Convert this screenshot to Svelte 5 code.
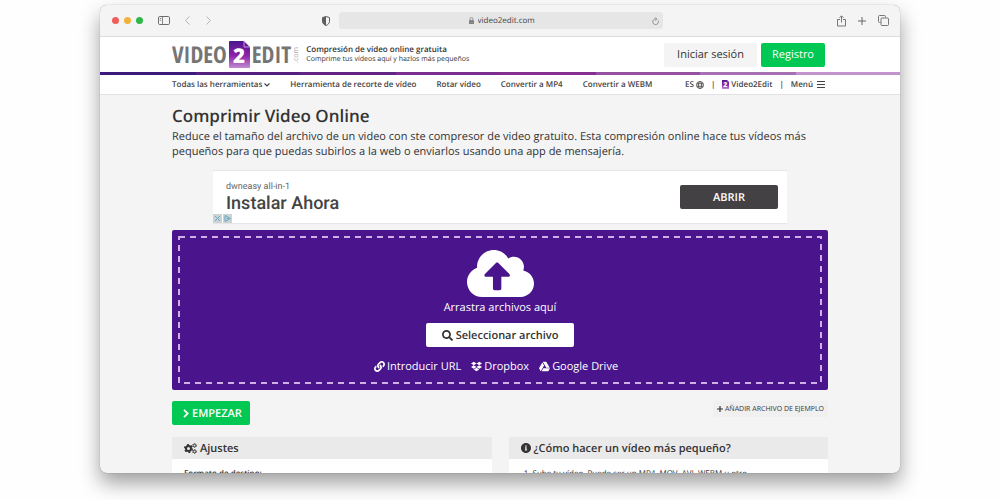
<script lang="ts">
  const tools = [
    'Herramienta de recorte de vídeo',
    'Rotar vídeo',
    'Convertir a MP4',
    'Convertir a WEBM',
  ]

  const sources = [
    {
      label: 'Introducir URL',
      box: '0 0 512 512',
      path: 'M326.612 185.391c59.747 59.809 58.927 155.698.36 214.59-.11.12-.24.25-.36.37l-67.2 67.2c-59.27 59.27-155.699 59.262-214.96 0-59.27-59.26-59.27-155.7 0-214.96l37.106-37.106c9.84-9.84 26.786-3.3 27.294 10.606.648 17.722 3.826 35.527 9.69 52.721 1.986 5.822.567 12.262-3.783 16.612l-13.087 13.087c-28.026 28.026-28.905 73.66-1.155 101.96 28.024 28.579 74.086 28.749 102.325.51l67.2-67.19c28.191-28.191 28.073-73.757 0-101.83-3.701-3.694-7.429-6.564-10.341-8.569a16.037 16.037 0 0 1-6.947-12.606c-.396-10.567 3.348-21.456 11.698-29.806l21.054-21.055c5.521-5.521 14.182-6.199 20.584-1.731a152.482 152.482 0 0 1 20.522 17.197zM467.547 44.449c-59.261-59.262-155.69-59.27-214.96 0l-67.2 67.2c-.12.12-.25.25-.36.37-58.566 58.892-59.387 154.781.36 214.59a152.454 152.454 0 0 0 20.521 17.196c6.402 4.468 15.064 3.789 20.584-1.731l21.054-21.055c8.35-8.35 12.094-19.239 11.698-29.806a16.037 16.037 0 0 0-6.947-12.606c-2.912-2.005-6.64-4.875-10.341-8.569-28.073-28.073-28.191-73.639 0-101.83l67.2-67.19c28.239-28.239 74.3-28.069 102.325.51 27.75 28.3 26.872 73.934-1.155 101.96l-13.087 13.087c-4.35 4.35-5.769 10.79-3.783 16.612 5.864 17.194 9.042 34.999 9.69 52.721.509 13.906 17.454 20.446 27.294 10.606l37.106-37.106c59.271-59.259 59.271-155.699.001-214.959z',
    },
    {
      label: 'Dropbox',
      box: '0 0 528 512',
      path: 'M264.4 116.3l-132 84.3 132 84.3-132 84.3L0 284.1l132.3-84.3L0 116.3 132.3 32l132.1 84.3zM131.6 395.7l132-84.3 132 84.3-132 84.3-132-84.3zm132.8-111.6l132-84.3-132-83.6L395.7 32 528 116.3l-132.3 84.3L528 284.8l-132.3 84.3-131.3-85z',
    },
    {
      label: 'Google Drive',
      box: '0 0 512 512',
      path: 'M339 314.9L175.4 32h161.2l163.6 282.9H339zm-137.5 23.6L120.9 480h310.5L512 338.5H201.5zM154.1 67.4L0 338.5 80.6 480 237 208.8 154.1 67.4z',
    },
  ]

  let url = $state('video2edit.com')
</script>

{#snippet badge()}
  <svg class="badge" viewBox="0 0 42 54" aria-hidden="true">
    <defs>
      <linearGradient id="violet" x1="0" y1="0" x2="0" y2="1">
        <stop offset="0" stop-color="#4a148c" />
        <stop offset="0.55" stop-color="#8e24aa" />
        <stop offset="1" stop-color="#c28bd2" />
      </linearGradient>
    </defs>
    <path fill="url(#violet)" d="M2 0h28l12 12v40a2 2 0 0 1-2 2H2a2 2 0 0 1-2-2V2a2 2 0 0 1 2-2z" />
    <path fill="#6a1b9a" stroke="#e1bee7" stroke-width="1.5" d="M30 0v12h12z" />
    <text x="20" y="43" text-anchor="middle" font-size="41" font-weight="800" fill="#fff">2</text>
  </svg>
{/snippet}

<div class="window">
  <div class="titlebar">
    <div class="side">
      <span class="light red"></span>
      <span class="light amber"></span>
      <span class="light green"></span>
      <svg class="sidebar" width="12" height="9" viewBox="0 0 12 9" fill="none" stroke="#6d6d6d">
        <rect x="0.5" y="0.5" width="11" height="8" rx="1.2" />
        <path d="M4.5 0.5v8M1.8 2.5h1.4M1.8 4.2h1.4" stroke-width="0.8" />
      </svg>
      <svg class="arrow" width="5" height="9" viewBox="0 0 5 9" fill="none" stroke="#b4b4b4">
        <path d="M4.5 0.5l-4 4 4 4" />
      </svg>
      <svg class="arrow" width="5" height="9" viewBox="0 0 5 9" fill="none" stroke="#b4b4b4">
        <path d="M0.5 0.5l4 4-4 4" />
      </svg>
      <svg class="shield" width="8" height="10" viewBox="0 0 8 10">
        <path d="M4 0.5L7.5 1.6v3.6C7.5 7.3 6 8.7 4 9.5 2 8.7 0.5 7.3 0.5 5.2V1.6z" fill="none" stroke="#5f5f5f" />
        <path d="M4 0.5v9C2 8.7 0.5 7.3 0.5 5.2V1.6z" fill="#5f5f5f" />
      </svg>
    </div>
    <div class="address">
      <svg width="5" height="7" viewBox="0 0 5 7" aria-hidden="true">
        <rect y="3" width="5" height="4" rx="0.6" fill="#858585" />
        <path d="M1.1 3V1.9a1.4 1.4 0 0 1 2.8 0V3" fill="none" stroke="#858585" stroke-width="0.8" />
      </svg>
      <input aria-label="Dirección" bind:value={url} />
      <svg class="reload" width="7" height="8" viewBox="0 0 7 8" fill="none" stroke="#7a7a7a" stroke-width="0.8">
        <path d="M6 3.4A2.8 2.8 0 1 1 3.5 2h1M3.2 0.4L4.8 2 3.2 3.5" />
      </svg>
    </div>
    <div class="side end">
      <svg width="9" height="12" viewBox="0 0 9 12" fill="none" stroke="#777">
        <path d="M3 4.5H0.5v6.5h8V4.5H6M4.5 7.5V1M2.5 2.8l2-2 2 2" />
      </svg>
      <svg width="8" height="8" viewBox="0 0 8 8" stroke="#666">
        <path d="M4 0v8M0 4h8" />
      </svg>
      <svg width="11" height="11" viewBox="0 0 11 11" fill="none" stroke="#777">
        <path d="M2.5 7.5H1.5a1 1 0 0 1-1-1v-5a1 1 0 0 1 1-1h5a1 1 0 0 1 1 1v1" />
        <rect x="3" y="3" width="7.5" height="7.5" rx="1" />
      </svg>
    </div>
  </div>

  <header>
    <div class="wrap masthead">
      <a class="logo" href="#inicio" aria-label="Video2Edit.com">
        <span>VIDEO</span>
        {@render badge()}
        <span>EDIT</span>
        <small>.com</small>
      </a>
      <div class="tagline">
        <strong>Compresión de vídeo online gratuita</strong>
        <span>Comprime tus vídeos aquí y hazlos más pequeños</span>
      </div>
      <div class="account">
        <button class="btn pale">Iniciar sesión</button>
        <button class="btn go">Registro</button>
      </div>
    </div>
  </header>

  <nav>
    <div class="wrap links">
      <a href="#herramientas">
        Todas las herramientas
        <svg width="6" height="4" viewBox="0 0 6 4" fill="none" stroke="currentColor" stroke-width="1.2">
          <path d="M0.5 0.5L3 3l2.5-2.5" />
        </svg>
      </a>
      {#each tools as tool}
        <a href="#herramientas">{tool}</a>
      {/each}
      <div class="extras">
        <a href="#idioma">
          ES
          <svg width="8" height="8" viewBox="0 0 16 16" fill="none" stroke="currentColor" stroke-width="1.6">
            <circle cx="8" cy="8" r="7" />
            <ellipse cx="8" cy="8" rx="3.2" ry="7" />
            <path d="M1.6 5.5h12.8M1.6 10.5h12.8" />
          </svg>
        </a>
        <i>|</i>
        <a href="#inicio">{@render badge()} Video2Edit</a>
        <i>|</i>
        <a class="menu" href="#menu">
          Menú
          <svg width="8" height="7" viewBox="0 0 8 7" stroke="currentColor">
            <path d="M0 0.5h8M0 3.5h8M0 6.5h8" />
          </svg>
        </a>
      </div>
    </div>
  </nav>

  <main class="wrap">
    <h1>Comprimir Video Online</h1>
    <p class="intro">
      Reduce el tamaño del archivo de un video con ste compresor de video gratuito. Esta compresión online hace tus
      vídeos más pequeños para que puedas subirlos a la web o enviarlos usando una app de mensajería.
    </p>

    <aside class="ad">
      <div>
        <small>dwneasy all-in-1</small>
        <strong>Instalar Ahora</strong>
      </div>
      <button class="open">ABRIR</button>
      <div class="marks">
        <svg width="9" height="9" viewBox="0 0 9 9" fill="none" stroke="#5fa9c4">
          <rect width="9" height="9" fill="#ccd3d6" stroke="none" />
          <path d="M2 2l5 5M7 2L2 7" />
        </svg>
        <svg width="9" height="9" viewBox="0 0 9 9" fill="none" stroke="#5fa9c4">
          <rect width="9" height="9" fill="#ccd3d6" stroke="none" />
          <path d="M2 1.5l5.5 3L2 7.5zM3.5 4.5h2" />
        </svg>
      </div>
    </aside>

    <section class="drop">
      <svg class="dashes" aria-hidden="true">
        <rect x="1" y="1" width="100%" height="100%" />
      </svg>
      <svg width="67" height="47" viewBox="0 32 640 448" fill="#fff" aria-hidden="true">
        <path d="M537.6 226.6c4.1-10.7 6.4-22.4 6.4-34.6 0-53-43-96-96-96-19.7 0-38.1 6-53.3 16.2C367 64.2 315.3 32 256 32c-88.4 0-160 71.6-160 160 0 2.7.1 5.4.2 8.1C40.2 219.8 0 273.2 0 336c0 79.5 64.5 144 144 144h368c70.7 0 128-57.3 128-128 0-61.9-44-113.6-102.4-125.4zM393.4 288H328v112c0 8.8-7.2 16-16 16h-48c-8.8 0-16-7.2-16-16V288h-65.4c-14.3 0-21.4-17.2-11.3-27.3l105.4-105.4c6.2-6.2 16.4-6.2 22.6 0l105.4 105.4c10.1 10.1 2.9 27.3-11.3 27.3z" />
      </svg>
      <span class="hint">Arrastra archivos aquí</span>
      <button class="btn pick">
        <svg width="11" height="11" viewBox="0 0 512 512" fill="currentColor" aria-hidden="true">
          <path d="M505 442.7L405.3 343c-4.5-4.5-10.6-7-17-7H372c27.6-35.3 44-79.7 44-128C416 93.1 322.9 0 208 0S0 93.1 0 208s93.1 208 208 208c48.3 0 92.7-16.4 128-44v16.3c0 6.4 2.5 12.5 7 17l99.7 99.7c9.4 9.4 24.6 9.4 33.9 0l28.3-28.3c9.4-9.4 9.4-24.6.1-34zM208 336c-70.7 0-128-57.2-128-128 0-70.7 57.2-128 128-128 70.7 0 128 57.2 128 128 0 70.7-57.2 128-128 128z" />
        </svg>
        Seleccionar archivo
      </button>
      <div class="sources">
        {#each sources as source}
          <button>
            <svg width="11" height="11" viewBox={source.box} fill="currentColor" aria-hidden="true">
              <path d={source.path} />
            </svg>
            {source.label}
          </button>
        {/each}
      </div>
    </section>

    <div class="actions">
      <button class="btn go start">
        <svg width="6" height="9" viewBox="0 0 6 9" fill="none" stroke="currentColor" stroke-width="1.8">
          <path d="M1 0.8l3.7 3.7L1 8.2" />
        </svg>
        EMPEZAR
      </button>
      <button class="sample">
        <svg width="6" height="6" viewBox="0 0 6 6" stroke="currentColor" stroke-width="1.2">
          <path d="M3 0v6M0 3h6" />
        </svg>
        AÑADIR ARCHIVO DE EJEMPLO
      </button>
    </div>

    <div class="cards">
      <section>
        <h2>
          <svg width="13" height="11" viewBox="0 0 26 22" fill="none" stroke="currentColor" aria-hidden="true">
            <circle cx="9" cy="11" r="5" stroke-width="4" />
            <circle cx="9" cy="11" r="7.6" stroke-width="3" stroke-dasharray="3.98 3.98" />
            <circle cx="21" cy="5" r="2.6" stroke-width="2" />
            <circle cx="21" cy="5" r="4" stroke-width="1.5" stroke-dasharray="2.09 2.09" />
            <circle cx="21" cy="17" r="2.6" stroke-width="2" />
            <circle cx="21" cy="17" r="4" stroke-width="1.5" stroke-dasharray="2.09 2.09" />
          </svg>
          Ajustes
        </h2>
        <p class="field">Formato de destino:</p>
      </section>
      <section>
        <h2>
          <svg width="10" height="10" viewBox="8 8 496 496" fill="currentColor" aria-hidden="true">
            <path d="M256 8C119.043 8 8 119.083 8 256c0 136.997 111.043 248 248 248s248-111.003 248-248C504 119.083 392.957 8 256 8zm0 110c23.196 0 42 18.804 42 42s-18.804 42-42 42-42-18.804-42-42 18.804-42 42-42zm56 254c0 6.627-5.373 12-12 12h-88c-6.627 0-12-5.373-12-12v-24c0-6.627 5.373-12 12-12h12v-64h-12c-6.627 0-12-5.373-12-12v-24c0-6.627 5.373-12 12-12h64c6.627 0 12 5.373 12 12v100h12c6.627 0 12 5.373 12 12v24z" />
          </svg>
          ¿Cómo hacer un vídeo más pequeño?
        </h2>
        <ol>
          <li>Sube tu vídeo. Puede ser un MP4, MOV, AVI, WEBM u otro</li>
        </ol>
      </section>
    </div>
  </main>
</div>

<style>
  :global(body) {
    background: #fefefe;
    color: #333;
    font-family: 'Open Sans', 'Noto Sans', sans-serif;
    text-rendering: geometricPrecision;
    overflow: hidden;
  }

  .window {
    box-sizing: border-box;
    height: calc(100vh - 32px);
    margin: 5px 10% 27px;
    background: #f4f4f5;
    border-radius: 7px;
    box-shadow:
      0 0 1px rgba(0, 0, 0, 0.4),
      0 10px 20px rgba(0, 0, 0, 0.38);
    overflow: hidden;
  }

  .wrap {
    width: 82%;
    margin: 0 auto;
  }

  svg {
    flex-shrink: 0;
  }

  a {
    color: inherit;
    text-decoration: none;
  }

  button {
    display: flex;
    align-items: center;
    justify-content: center;
    padding: 0;
    font: inherit;
    color: inherit;
    text-rendering: inherit;
    background: none;
    border: 0;
    cursor: pointer;
  }

  .btn {
    height: 24px;
    padding: 0 11px;
    font-size: 11px;
    border-radius: 2px;
  }

  .pale {
    padding: 0 13px;
    background: #f4f4f5;
  }

  .go {
    background: #00c853;
    color: #fff;
  }

  .titlebar {
    display: grid;
    grid-template-columns: 1fr 324px 1fr;
    gap: 9px;
    align-items: center;
    height: 32px;
    padding: 0 11px 0 12px;
    border-bottom: 1px solid #dcdcdc;
    box-sizing: border-box;
  }

  .side {
    display: flex;
    align-items: center;
    gap: 5px;
  }

  .end {
    gap: 12px;
    justify-content: flex-end;
  }

  .light {
    width: 7px;
    height: 7px;
    border-radius: 50%;
  }

  .red {
    background: #ee5f5b;
  }

  .amber {
    background: #f3b13c;
  }

  .green {
    background: #2fb84a;
  }

  .sidebar {
    margin: 0 10px;
  }

  .arrow {
    margin-right: 11px;
  }

  .shield {
    margin-left: auto;
  }

  .address {
    display: flex;
    align-items: center;
    justify-content: center;
    gap: 4px;
    height: 17px;
    padding: 0 4px 0 20px;
    background: #e6e6e6;
    border-radius: 3px;
  }

  .address svg:first-child {
    margin-left: auto;
  }

  .address input {
    width: 60px;
    padding: 0;
    font: 8px 'Open Sans', sans-serif;
    text-rendering: inherit;
    color: #444;
    background: none;
    border: 0;
  }

  .reload {
    margin-left: auto;
  }

  header {
    background: #fff;
  }

  header::after {
    content: '';
    display: block;
    height: 3px;
    background: linear-gradient(
      90deg,
      #3f1a7d 12%,
      #56207f 12% 25%,
      #632585 25% 37%,
      #7b2e8e 37% 50%,
      #852f90 50% 62%,
      #9650a2 62% 75%,
      #a870b4 75% 87%,
      #c293cc 87%
    );
  }

  .masthead {
    display: flex;
    align-items: center;
    height: 35px;
  }

  .logo {
    display: flex;
    align-items: center;
    gap: 2px;
    font: bold 23px/27px 'Open Sans Condensed', 'Liberation Sans Narrow', 'DejaVu Sans Condensed', sans-serif;
    color: #757575;
  }

  .logo small {
    font: 7px/7px 'Open Sans', sans-serif;
    color: #aaa;
    writing-mode: vertical-rl;
    rotate: 180deg;
  }

  .badge {
    width: 21px;
    height: 27px;
    font-family: 'Open Sans', sans-serif;
  }

  .tagline {
    display: flex;
    flex-direction: column;
    margin-left: 6px;
    font-size: 7px;
    line-height: 10px;
  }

  .tagline strong {
    font-size: 8px;
    font-weight: 600;
  }

  .account {
    display: flex;
    gap: 4px;
    margin: 0 3px 0 auto;
  }

  nav {
    background: #fff;
    border-bottom: 1px solid #e2e2e2;
  }

  .links {
    display: flex;
    align-items: center;
    gap: 20px;
    height: 19px;
    font-size: 8px;
    font-weight: 600;
    color: #444;
    white-space: nowrap;
  }

  .links a {
    display: flex;
    align-items: center;
    gap: 2px;
  }

  .extras {
    display: flex;
    align-items: center;
    gap: 7px;
    margin: 0 3px 0 auto;
  }

  .links .menu {
    gap: 4px;
  }

  .extras i {
    font-style: normal;
  }

  .links .badge {
    width: 7px;
    height: 9px;
  }

  h1 {
    margin: 0;
    padding-top: 9px;
    font-size: 17px;
    line-height: 24px;
    font-weight: 600;
  }

  .intro {
    margin: 1px 0 11px;
    font-size: 11px;
    line-height: 15px;
  }

  .ad {
    position: relative;
    display: flex;
    align-items: center;
    justify-content: space-between;
    box-sizing: border-box;
    width: 574px;
    max-width: 100%;
    height: 54px;
    margin: 0 auto 6px;
    padding: 0 9px 0 13px;
    background: #fff;
    border: 1px solid #e6e6e8;
    border-width: 1px 0;
  }

  .ad small,
  .ad strong {
    display: block;
    font: 9px/14px Roboto, sans-serif;
    color: #666;
  }

  .ad strong {
    font-size: 18px;
    line-height: 20px;
    font-weight: 500;
    color: #444;
  }

  .open {
    width: 98px;
    height: 24px;
    font-size: 11px;
    font-weight: 600;
    color: #fff;
    background: #434144;
    border-radius: 2px;
  }

  .marks {
    position: absolute;
    bottom: 0;
    left: 0;
    display: flex;
    gap: 1px;
  }

  .drop {
    position: relative;
    display: flex;
    flex-direction: column;
    align-items: center;
    padding: 20px 0 16px;
    font-size: 11px;
    line-height: 15px;
    color: #fff;
    background: #4a148c;
    border-radius: 2px;
  }

  .dashes {
    position: absolute;
    inset: 6px;
    width: calc(100% - 14px);
    height: calc(100% - 14px);
    overflow: visible;
    fill: none;
    stroke: #cfb0e6;
    stroke-width: 2;
    stroke-dasharray: 6 5;
    pointer-events: none;
  }

  .hint {
    padding: 3px 0 8px;
  }

  .pick {
    gap: 3px;
    padding: 0 16px;
    font-weight: 600;
    color: #333;
    background: #fff;
  }

  .sources {
    display: flex;
    gap: 10px;
    padding: 12px 8px 0 0;
  }

  .sources button {
    gap: 2px;
  }

  .actions {
    display: flex;
    align-items: flex-start;
    justify-content: space-between;
    padding: 11px 0 12px;
  }

  .start {
    gap: 3px;
    padding: 0 8px 0 11px;
    font-weight: 600;
  }

  .sample {
    gap: 2px;
    height: 16px;
    padding: 0 4px;
    font-size: 7px;
    background: #f0f0f0;
  }

  .cards {
    display: grid;
    grid-template-columns: 1fr 1fr;
    gap: 17px;
  }

  .cards section {
    background: #fff;
  }

  h2 {
    display: flex;
    align-items: center;
    gap: 3px;
    height: 22px;
    margin: 0;
    padding: 0 12px;
    font-size: 11px;
    font-weight: 600;
    background: #ebeaea;
  }

  .field,
  ol {
    margin: 0;
    padding: 9px 12px;
    font-size: 8px;
    line-height: 12px;
  }

  .field {
    font-weight: 600;
  }

  ol {
    padding-left: 24px;
  }
</style>
